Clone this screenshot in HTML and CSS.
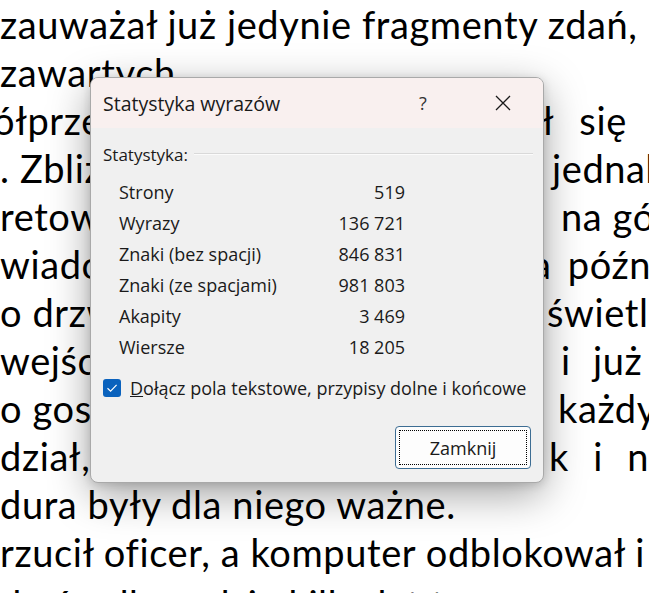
FILE: index.html
```html
<!DOCTYPE html>
<html lang="pl">
<head>
<meta charset="utf-8">
<title>Statystyka wyrazów</title>
<link rel="stylesheet" href="styles.css">
</head>
<body>
<div class="doc">
  <div class="line">zauważał już jedynie fragmenty zdań,</div>
  <div class="line">zawartych.</div>
  <div class="line"><span class="l cut">ółprzezroczystą szybą</span><span class="r r3">ł się</span></div>
  <div class="line"><span class="l">. Zbliżając się do drzwi</span><span class="r r4">jednak</span></div>
  <div class="line"><span class="l">retowanej części</span><span class="r r5">na gó</span></div>
  <div class="line"><span class="l">wiadomość dotarła</span><span class="r r6">a późn</span></div>
  <div class="line"><span class="l">o drzwi zapaliło</span><span class="r r7">świetl</span></div>
  <div class="line"><span class="l">wejściem do sali</span><span class="r r8">i już</span></div>
  <div class="line"><span class="l">o gospodarza</span><span class="r r9">każdy</span></div>
  <div class="line"><span class="l">dział, że porządek</span><span class="r r10">k i n</span></div>
  <div class="line">dura były dla niego ważne.</div>
  <div class="line">rzucił oficer, a komputer odblokował i</div>
  <div class="line next">do środka, gdzie kilka lat temu</div>
</div>

<div class="dialog">
  <div class="titlebar">
    <span class="title">Statystyka wyrazów</span>
    <span class="help">?</span>
    <span class="close">
      <svg width="16" height="16" viewBox="0 0 16 16"><path d="M1 1 L15 15 M15 1 L1 15" stroke="#1a1a1a" stroke-width="1.3" fill="none"/></svg>
    </span>
  </div>
  <div class="content">
    <div class="group"><span>Statystyka:</span><span class="rule"></span></div>
    <div class="stats">
      <span>Strony</span><span class="num">519</span>
      <span>Wyrazy</span><span class="num">136 721</span>
      <span>Znaki (bez spacji)</span><span class="num">846 831</span>
      <span>Znaki (ze spacjami)</span><span class="num">981 803</span>
      <span>Akapity</span><span class="num">3 469</span>
      <span>Wiersze</span><span class="num">18 205</span>
    </div>
    <div class="check">
      <span class="box"><svg width="18" height="18" viewBox="0 0 18 18"><path d="M4.5 9.2 L7.6 12.2 L13.6 5.8" stroke="#fff" stroke-width="1.2" fill="none"/></svg></span>
      <span class="check-label"><u>D</u>ołącz pola tekstowe, przypisy dolne i końcowe</span>
    </div>
    <div class="actions">
      <button class="btn"><span class="focus">Zamknij</span></button>
    </div>
  </div>
</div>
</body>
</html>
```
FILE: styles.css
```css
html, body {
  margin: 0;
  padding: 0;
}
body {
  width: 649px;
  height: 593px;
  overflow: hidden;
  background: #ffffff;
  position: relative;
}
.doc {
  font-family: "Lato", "Liberation Sans", sans-serif;
  font-size: 38px;
  letter-spacing: 0.6px;
  line-height: 48px;
  color: #000;
  padding-top: 0;
}
.line {
  display: flex;
  white-space: nowrap;
  height: 48px;
}
.next { margin-top: 4px; }
.l {
  flex: 0 0 545px;
  overflow: hidden;
}
.cut { text-indent: -7px; }
.r { flex: none; }
.r3 { margin-left: -3px; word-spacing: 16px; }
.r4 { padding-left: 7px; }
.r5 { padding-left: 16px; }
.r6 { margin-left: -13px; word-spacing: 6px; }
.r7 { padding-left: 2px; }
.r8 { padding-left: 16px; word-spacing: 12px; }
.r9 { padding-left: 13px; }
.r10 { padding-left: 4px; word-spacing: 14px; }

.dialog {
  position: absolute;
  left: 90px;
  top: 77px;
  width: 452px;
  height: 404px;
  border: 1px solid #a9a9a9;
  border-radius: 8px;
  background: #f0f0f0;
  box-shadow: 0 12px 42px rgba(0,0,0,0.36), 0 2px 10px rgba(0,0,0,0.14);
  overflow: hidden;
  font-family: "Open Sans", "Noto Sans", sans-serif;
  color: #1a1a1a;
  display: flex;
  flex-direction: column;
}
.titlebar {
  height: 50px;
  background: #f9f0ef;
  display: flex;
  align-items: center;
  padding-left: 12px;
  flex: none;
}
.title {
  font-size: 19.5px;
  flex: 1;
}
.help {
  font-size: 18px;
  width: 24px;
  text-align: center;
  margin-right: 60px;
  color: #333;
}
.close {
  width: 16px;
  height: 16px;
  margin-right: 32px;
  display: flex;
}
.content {
  flex: 1;
  padding: 13px 10px 13px 12px;
  display: flex;
  flex-direction: column;
  font-size: 18px;
}
.group {
  display: flex;
  align-items: center;
  gap: 6px;
  height: 26px;
  font-size: 17px;
}
.rule {
  flex: 1;
  height: 1px;
  background: #d9d9d9;
  border-bottom: 1px solid #fbfbfb;
}
.stats {
  display: grid;
  grid-template-columns: 1fr auto;
  grid-auto-rows: 31px;
  align-items: center;
  width: 286px;
  margin-left: 16px;
  margin-top: 9px;
}
.num { text-align: right; }
.check {
  display: flex;
  align-items: center;
  gap: 9px;
  margin-top: 14px;
  height: 24px;
  font-size: 18px;
}
.box {
  width: 18px;
  height: 18px;
  border-radius: 3px;
  background: #0a62bd;
  display: flex;
}
.actions {
  display: flex;
  justify-content: flex-end;
  margin-top: auto;
  padding-right: 2px;
}
.btn {
  width: 136px;
  height: 43px;
  padding: 3px;
  border: 1px solid #3d6d93;
  border-radius: 4px;
  background: #fdfdfd;
  font-family: "Open Sans", "Noto Sans", sans-serif;
  font-size: 18px;
  color: #1a1a1a;
  display: flex;
}
.focus {
  flex: 1;
  border: 1px dotted #000;
  display: flex;
  align-items: center;
  justify-content: center;
}
```
